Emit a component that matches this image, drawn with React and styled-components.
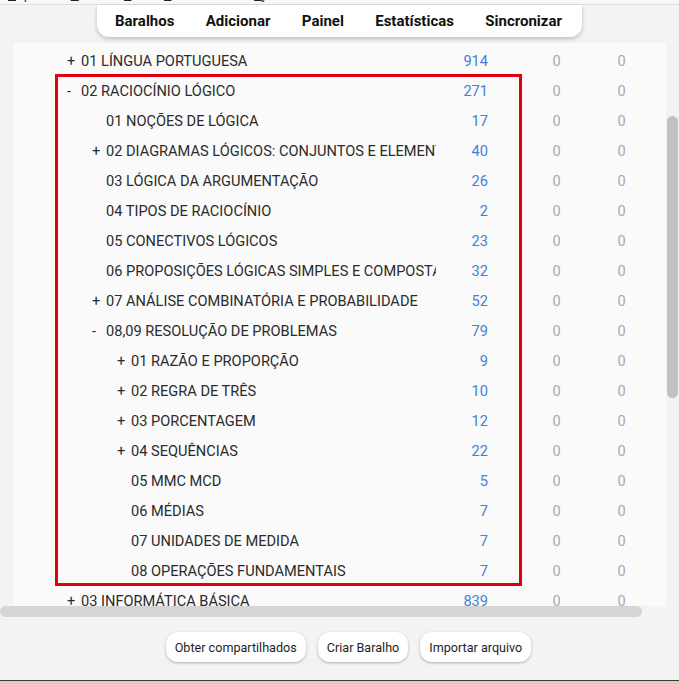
import React from 'react'
import styled, { createGlobalStyle } from 'styled-components'

const GlobalStyle = createGlobalStyle`
  html, body {
    margin: 0;
    padding: 0;
    background: #f3f3f3;
    font-family: Roboto, "Liberation Sans", sans-serif;
  }
`

const rows = [
  [0, '+', '01 LÍNGUA PORTUGUESA', 914],
  [0, '-', '02 RACIOCÍNIO LÓGICO', 271],
  [1, '', '01 NOÇÕES DE LÓGICA', 17],
  [1, '+', '02 DIAGRAMAS LÓGICOS: CONJUNTOS E ELEMENTOS', 40],
  [1, '', '03 LÓGICA DA ARGUMENTAÇÃO', 26],
  [1, '', '04 TIPOS DE RACIOCÍNIO', 2],
  [1, '', '05 CONECTIVOS LÓGICOS', 23],
  [1, '', '06 PROPOSIÇÕES LÓGICAS SIMPLES E COMPOSTAS', 32],
  [1, '+', '07 ANÁLISE COMBINATÓRIA E PROBABILIDADE', 52],
  [1, '-', '08,09 RESOLUÇÃO DE PROBLEMAS', 79],
  [2, '+', '01 RAZÃO E PROPORÇÃO', 9],
  [2, '+', '02 REGRA DE TRÊS', 10],
  [2, '+', '03 PORCENTAGEM', 12],
  [2, '+', '04 SEQUÊNCIAS', 22],
  [2, '', '05 MMC MCD', 5],
  [2, '', '06 MÉDIAS', 7],
  [2, '', '07 UNIDADES DE MEDIDA', 7],
  [2, '', '08 OPERAÇÕES FUNDAMENTAIS', 7],
  [0, '+', '03 INFORMÁTICA BÁSICA', 839],
]

const menu = ['Arquivo', 'Editar', 'Ver', 'Ferramentas', 'Ajuda']

const Page = styled.div`
  height: 684px;
  display: flex;
  flex-direction: column;
  overflow: hidden;
`

// only the bottom few pixels of the window menu show in the picture
const MenuStrip = styled.div`
  height: 4px;
  overflow: hidden;
  background: #f7f7f7;
  border-bottom: 1px solid #dedede;
  flex-shrink: 0;
`

const MenuLine = styled.div`
  display: flex;
  gap: 22px;
  padding-left: 8px;
  margin-top: -12px;
  font-size: 12px;
  line-height: 14px;
  color: #222;
  font-family: "Liberation Sans", sans-serif;
`

const MenuItem = styled.span`
  &::first-letter {
    text-decoration: underline;
  }
`

const ToolbarWrap = styled.div`
  display: flex;
  justify-content: center;
  flex-shrink: 0;
`

const Toolbar = styled.nav`
  height: 32px;
  width: 485px;
  box-sizing: border-box;
  display: flex;
  align-items: center;
  justify-content: space-between;
  padding: 0 20px 0 18px;
  background: #fff;
  border-radius: 0 0 12px 12px;
  box-shadow: 0 2px 4px rgba(0, 0, 0, 0.22);
`

const ToolLink = styled.span`
  font-size: 15px;
  font-weight: 700;
  color: #111;
`

const Body = styled.div`
  margin-top: 6px;
  height: 563px;
  display: flex;
  flex-shrink: 0;
`

const Viewport = styled.div`
  flex: 1;
  overflow: hidden;
  padding-left: 13px;
`

const Panel = styled.div`
  height: 100%;
  background: #fafafa;
  padding-top: 3px;
  box-sizing: border-box;
`

const List = styled.div`
  position: relative;
`

const Row = styled.div`
  height: 30px;
  display: flex;
  align-items: center;
  padding-left: 54px;
  font-size: 14.6px;
  color: #2b2b2b;
  white-space: nowrap;
`

const Name = styled.div`
  width: 369px;
  overflow: hidden;
  padding-left: ${(p) => p.depth * 25}px;
  box-sizing: border-box;
`

const Toggle = styled.span`
  display: inline-block;
  width: 14px;
`

const Count = styled.div`
  width: 52px;
  text-align: right;
  color: #4281d6;
`

const Due = styled.div`
  width: 65px;
  text-align: center;
  color: #aaaaaa;
  margin-left: ${(p) => (p.first ? '36px' : '0')};
`

const Highlight = styled.div`
  position: absolute;
  left: 42px;
  top: 28px;
  width: 467px;
  height: 512px;
  border: 3px solid #e2000f;
  box-sizing: border-box;
  pointer-events: none;
`

const VTrack = styled.div`
  width: 13px;
  padding-top: 73px;
  box-sizing: border-box;
`

const VThumb = styled.div`
  width: 11px;
  height: 282px;
  margin-left: 1px;
  border-radius: 6px;
  background: #c1c1c1;
`

const HTrack = styled.div`
  height: 12px;
  flex-shrink: 0;
`

const HThumb = styled.div`
  width: 642px;
  height: 11px;
  border-radius: 6px;
  background: #d5d5d5;
`

const Footer = styled.div`
  flex: 1;
  display: flex;
  justify-content: center;
  align-items: flex-start;
  gap: 12px;
  padding: 14px 0 0 18px;
`

const Button = styled.button`
  height: 30px;
  padding: 0 9px;
  border: none;
  border-radius: 12px;
  background: #fff;
  box-shadow: 0 1px 3px rgba(0, 0, 0, 0.28);
  font-family: Roboto, "Liberation Sans", sans-serif;
  font-size: 12.6px;
  color: #1e1e1e;
`

const Taskbar = styled.div`
  height: 3px;
  flex-shrink: 0;
  border-top: 1px solid #3c3a38;
  background: #d9cdbf;
`

const App = () => {
  return (
    <Page>
      <GlobalStyle />
      <MenuStrip>
        <MenuLine>
          {menu.map((m) => (
            <MenuItem key={m}>{m}</MenuItem>
          ))}
        </MenuLine>
      </MenuStrip>
      <ToolbarWrap>
        <Toolbar>
          <ToolLink>Baralhos</ToolLink>
          <ToolLink>Adicionar</ToolLink>
          <ToolLink>Painel</ToolLink>
          <ToolLink>Estatísticas</ToolLink>
          <ToolLink>Sincronizar</ToolLink>
        </Toolbar>
      </ToolbarWrap>
      <Body>
        <Viewport>
          <Panel>
            <List>
              {rows.map(([depth, toggle, name, count]) => (
                <Row key={name + depth}>
                  <Name depth={depth}>
                    <Toggle>{toggle}</Toggle>
                    {name}
                  </Name>
                  <Count>{count}</Count>
                  <Due first>0</Due>
                  <Due>0</Due>
                </Row>
              ))}
              <Highlight />
            </List>
          </Panel>
        </Viewport>
        <VTrack>
          <VThumb />
        </VTrack>
      </Body>
      <HTrack>
        <HThumb />
      </HTrack>
      <Footer>
        <Button>Obter compartilhados</Button>
        <Button>Criar Baralho</Button>
        <Button>Importar arquivo</Button>
      </Footer>
      <Taskbar />
    </Page>
  )
}

export default App
